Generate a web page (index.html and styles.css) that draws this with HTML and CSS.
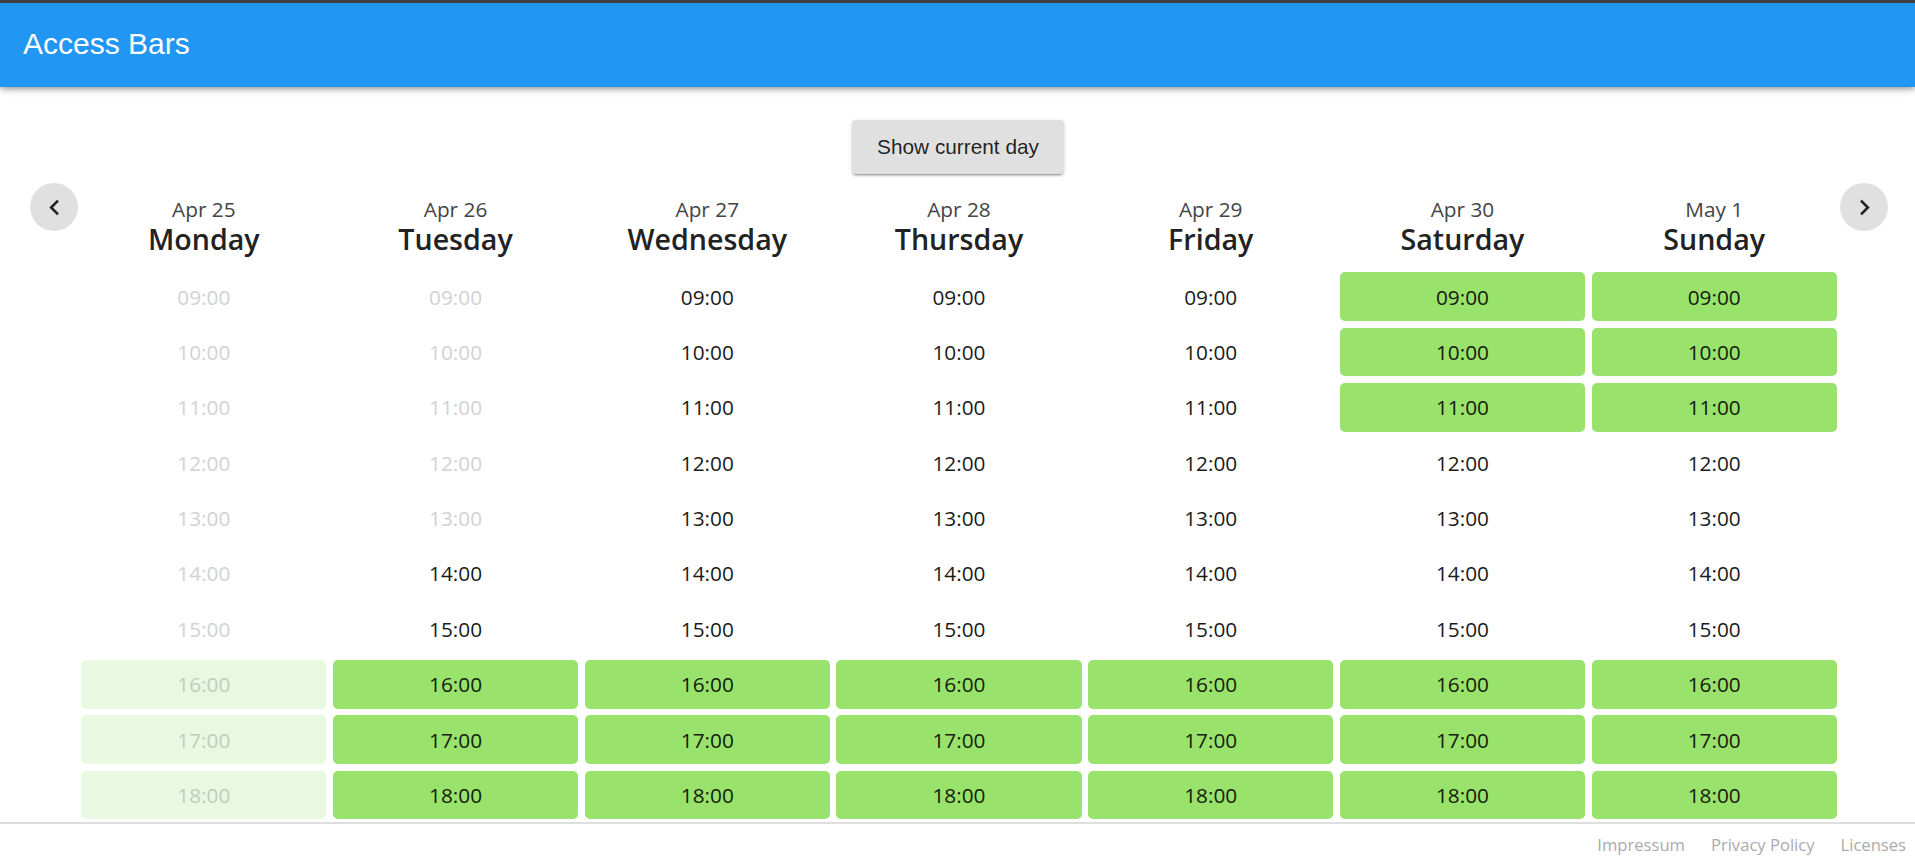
FILE: index.html
```html
<!DOCTYPE html>
<html lang="en">
<head>
<meta charset="utf-8">
<title>Access Bars</title>
<link rel="stylesheet" href="styles.css">
</head>
<body>
<div class="app">
  <header class="topbar"><h1 class="title">Access Bars</h1></header>
  <main class="main">
    <div class="actions"><button class="current-btn">Show current day</button></div>
    <div class="week">
      <button class="nav" aria-label="previous"><svg viewBox="0 0 24 24"><path d="M15.41 7.41L14 6l-6 6 6 6 1.41-1.41L10.83 12z"/></svg></button>
      <div class="days">
        <div class="day">
          <div class="day-head"><div class="date">Apr 25</div><div class="name">Monday</div></div>
          <div class="slots">
            <div class="slot past">09:00</div><div class="slot past">10:00</div><div class="slot past">11:00</div><div class="slot past">12:00</div><div class="slot past">13:00</div><div class="slot past">14:00</div><div class="slot past">15:00</div>
            <div class="slot past free">16:00</div><div class="slot past free">17:00</div><div class="slot past free">18:00</div>
          </div>
        </div>
        <div class="day">
          <div class="day-head"><div class="date">Apr 26</div><div class="name">Tuesday</div></div>
          <div class="slots">
            <div class="slot past">09:00</div><div class="slot past">10:00</div><div class="slot past">11:00</div><div class="slot past">12:00</div><div class="slot past">13:00</div><div class="slot">14:00</div><div class="slot">15:00</div>
            <div class="slot free">16:00</div><div class="slot free">17:00</div><div class="slot free">18:00</div>
          </div>
        </div>
        <div class="day">
          <div class="day-head"><div class="date">Apr 27</div><div class="name">Wednesday</div></div>
          <div class="slots">
            <div class="slot">09:00</div><div class="slot">10:00</div><div class="slot">11:00</div><div class="slot">12:00</div><div class="slot">13:00</div><div class="slot">14:00</div><div class="slot">15:00</div>
            <div class="slot free">16:00</div><div class="slot free">17:00</div><div class="slot free">18:00</div>
          </div>
        </div>
        <div class="day">
          <div class="day-head"><div class="date">Apr 28</div><div class="name">Thursday</div></div>
          <div class="slots">
            <div class="slot">09:00</div><div class="slot">10:00</div><div class="slot">11:00</div><div class="slot">12:00</div><div class="slot">13:00</div><div class="slot">14:00</div><div class="slot">15:00</div>
            <div class="slot free">16:00</div><div class="slot free">17:00</div><div class="slot free">18:00</div>
          </div>
        </div>
        <div class="day">
          <div class="day-head"><div class="date">Apr 29</div><div class="name">Friday</div></div>
          <div class="slots">
            <div class="slot">09:00</div><div class="slot">10:00</div><div class="slot">11:00</div><div class="slot">12:00</div><div class="slot">13:00</div><div class="slot">14:00</div><div class="slot">15:00</div>
            <div class="slot free">16:00</div><div class="slot free">17:00</div><div class="slot free">18:00</div>
          </div>
        </div>
        <div class="day">
          <div class="day-head"><div class="date">Apr 30</div><div class="name">Saturday</div></div>
          <div class="slots">
            <div class="slot free">09:00</div><div class="slot free">10:00</div><div class="slot free">11:00</div><div class="slot">12:00</div><div class="slot">13:00</div><div class="slot">14:00</div><div class="slot">15:00</div>
            <div class="slot free">16:00</div><div class="slot free">17:00</div><div class="slot free">18:00</div>
          </div>
        </div>
        <div class="day">
          <div class="day-head"><div class="date">May 1</div><div class="name">Sunday</div></div>
          <div class="slots">
            <div class="slot free">09:00</div><div class="slot free">10:00</div><div class="slot free">11:00</div><div class="slot">12:00</div><div class="slot">13:00</div><div class="slot">14:00</div><div class="slot">15:00</div>
            <div class="slot free">16:00</div><div class="slot free">17:00</div><div class="slot free">18:00</div>
          </div>
        </div>
      </div>
      <button class="nav" aria-label="next"><svg viewBox="0 0 24 24"><path d="M8.59 16.59L10 18l6-6-6-6-1.41 1.41L13.17 12z"/></svg></button>
    </div>
  </main>
  <footer class="footer">
    <a class="foot-link" href="#">Impressum</a>
    <a class="foot-link" href="#">Privacy Policy</a>
    <a class="foot-link" href="#">Licenses</a>
  </footer>
</div>
</body>
</html>
```

FILE: styles.css
```css
* { box-sizing: border-box; }
html, body { margin: 0; padding: 0; height: 100%; }
body {
  font-family: "Open Sans", "Noto Sans", sans-serif;
  background: #fff;
  color: #222;
}
.app {
  height: 100vh;
  display: flex;
  flex-direction: column;
  overflow: hidden;
}
.topbar {
  flex: none;
  height: 87px;
  border-top: 3px solid #3c3f43;
  background: #2196f3;
  display: flex;
  align-items: center;
  padding: 0 0 2px 23px;
  box-shadow: 0 2px 4px -1px rgba(0,0,0,.2), 0 4px 5px 0 rgba(0,0,0,.14), 0 1px 10px 0 rgba(0,0,0,.12);
  position: relative;
  z-index: 2;
}
.title {
  margin: 0;
  font-family: "Liberation Sans", Arial, sans-serif;
  font-weight: 400;
  font-size: 30px;
  color: #fff;
}
.main {
  flex: 1;
  min-height: 0;
  overflow: hidden;
}
.actions {
  display: flex;
  justify-content: center;
  padding: 33px 0 0 1px;
}
.current-btn {
  height: 54px;
  padding: 0 25px;
  border: none;
  border-radius: 4px;
  background: #e0e0e0;
  color: rgba(0,0,0,.87);
  font-family: "Liberation Sans", Arial, sans-serif;
  font-size: 20.8px;
  box-shadow: 0 3px 1px -2px rgba(0,0,0,.2), 0 2px 2px 0 rgba(0,0,0,.14), 0 1px 5px 0 rgba(0,0,0,.12);
}
.week {
  display: flex;
  align-items: flex-start;
  gap: 3.3px;
  padding: 9px 27px 0 30px;
}
.nav {
  flex: none;
  width: 48px;
  height: 48px;
  border: none;
  border-radius: 50%;
  background: #e0e0e0;
  padding: 0;
  display: flex;
  align-items: center;
  justify-content: center;
}
.nav svg {
  width: 31px;
  height: 31px;
  fill: #222;
}
.days {
  flex: 1;
  display: grid;
  grid-template-columns: repeat(7, 1fr);
  column-gap: 6.7px;
}
.day {
  display: flex;
  flex-direction: column;
  min-width: 0;
}
.day-head {
  text-align: center;
  padding: 12.6px 0 13.3px;
}
.date {
  font-size: 20.8px;
  line-height: 26px;
  color: #444;
}
.name {
  font-size: 28.6px;
  line-height: 34px;
  font-weight: 600;
  color: #222;
}
.slots {
  display: flex;
  flex-direction: column;
  gap: 6.9px;
  padding-top: 3.4px;
}
.slot {
  height: 48.5px;
  border-radius: 5px;
  display: flex;
  align-items: center;
  justify-content: center;
  font-size: 20.8px;
  color: #1a1a1a;
}
.slot.free {
  background: #99e26b;
  color: #14200d;
}
.slot.past {
  color: #d2d2d2;
}
.slot.past.free {
  background: #e8f8e1;
  color: #c0cdb9;
}
.footer {
  flex: none;
  height: 43px;
  border-top: 2px solid #dedede;
  display: flex;
  justify-content: flex-end;
  align-items: center;
  gap: 26px;
  padding: 0 9px 0 0;
}
.foot-link {
  font-size: 16.6px;
  color: #ababab;
  text-decoration: none;
}
```
